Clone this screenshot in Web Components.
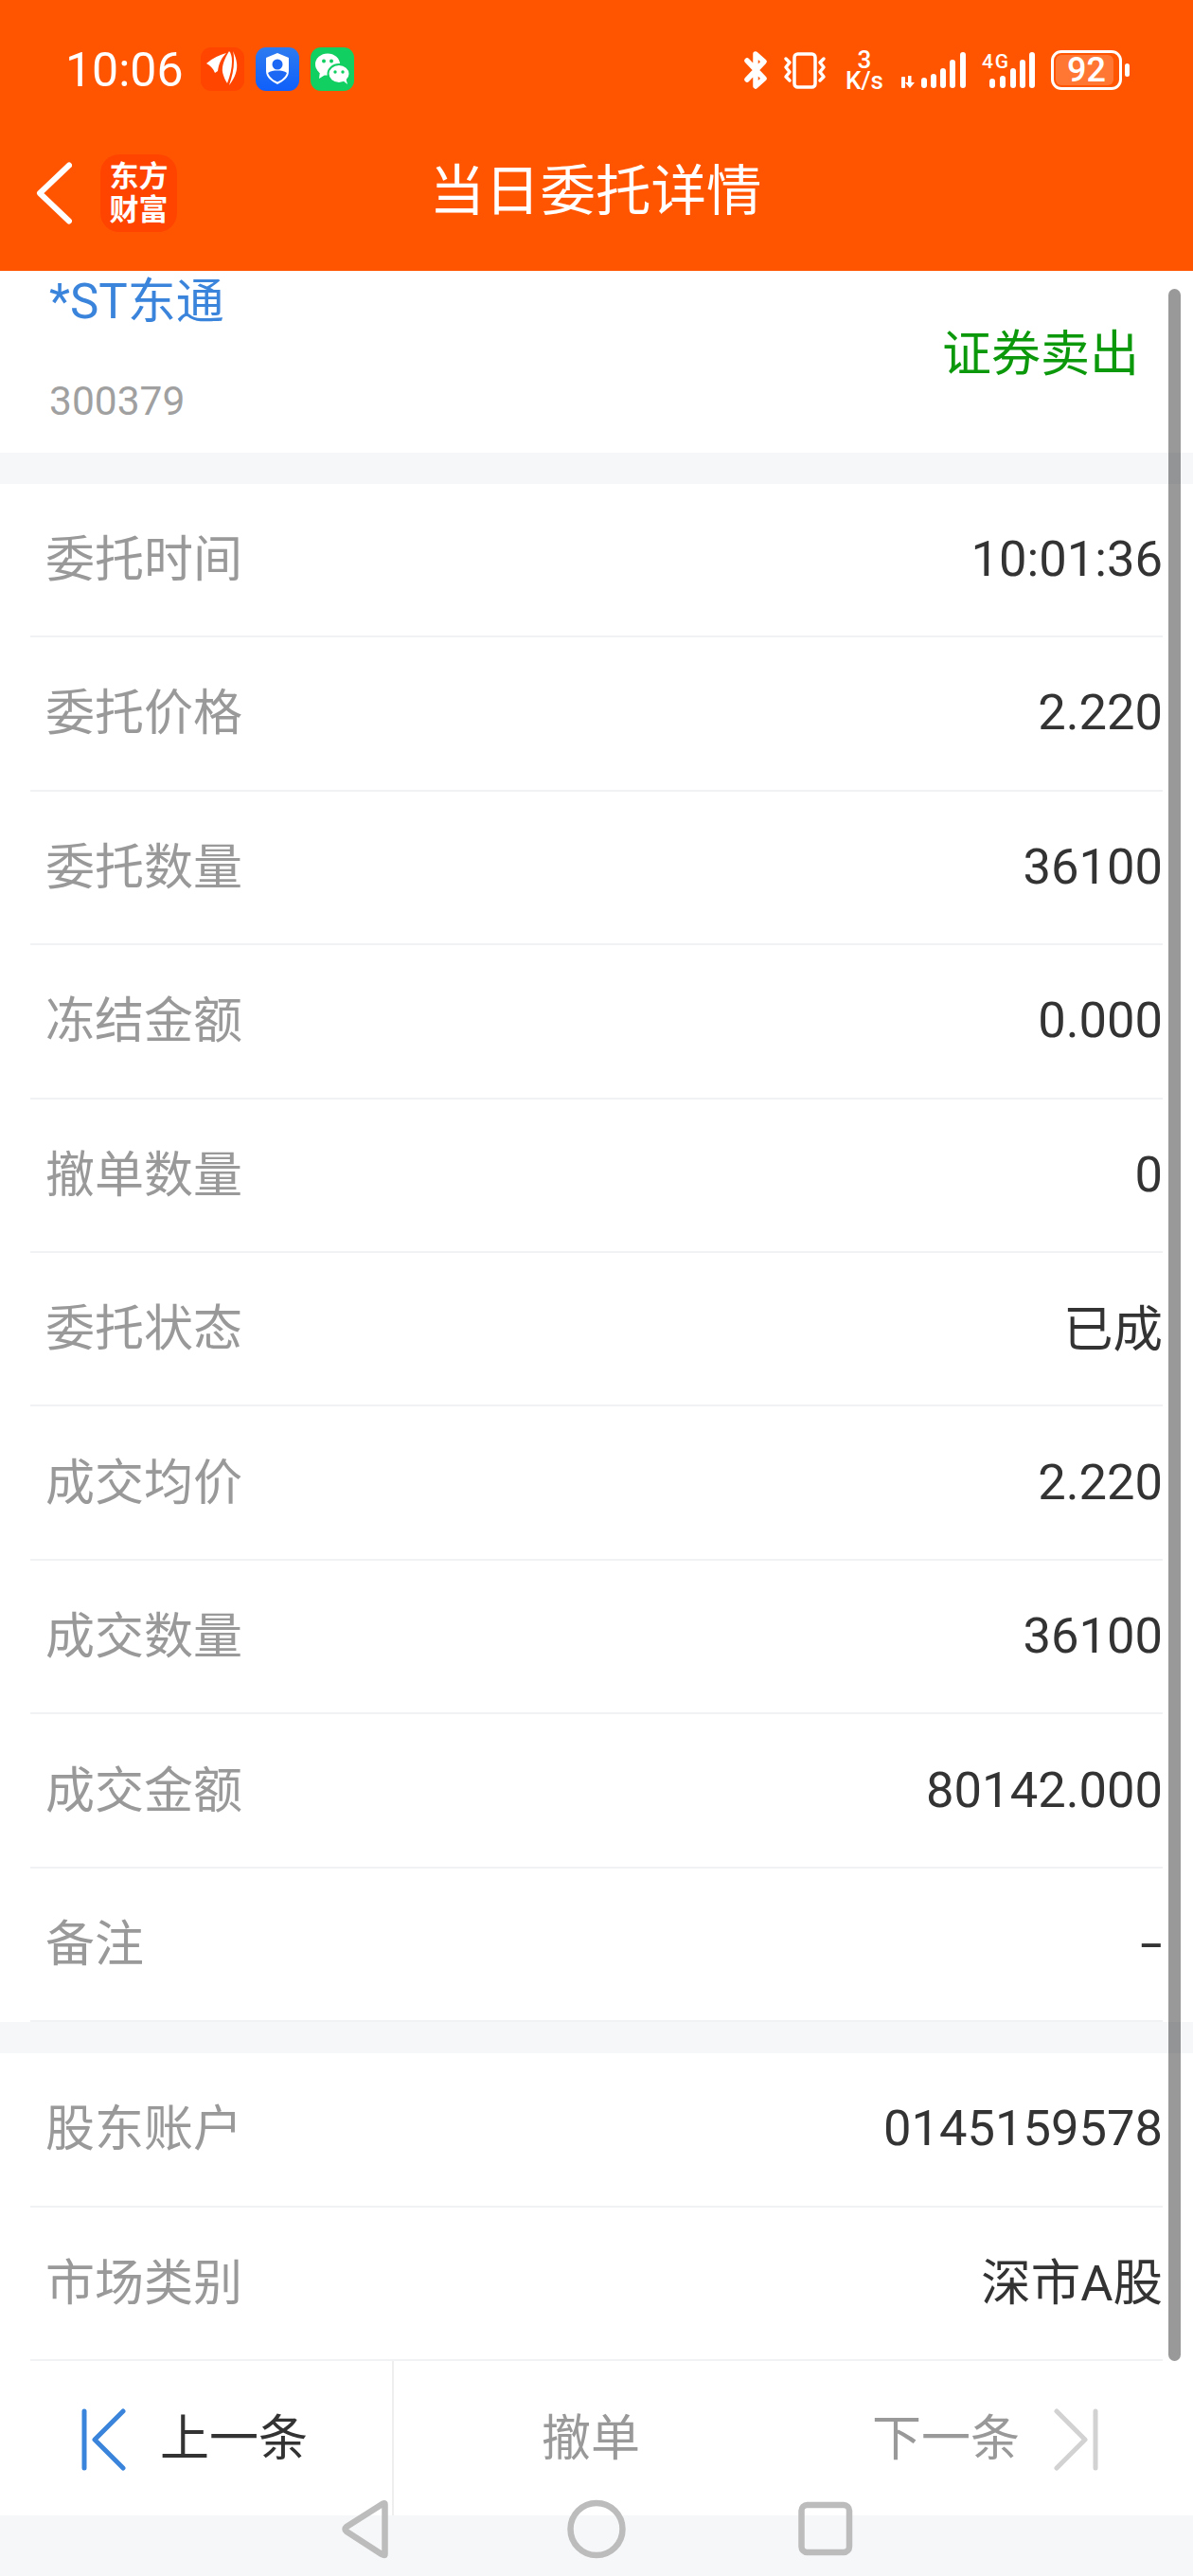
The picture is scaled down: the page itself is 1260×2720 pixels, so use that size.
<!DOCTYPE html>
<html lang="zh-CN">
<head>
<meta charset="utf-8">
<title>当日委托详情</title>
<style>
    html, body {
        margin: 0;
        padding: 0;
        background: #fff;
        font-family: Roboto, "Noto Sans CJK SC", sans-serif;
    }
</style>
</head>
<body>
<app-screen>
    <status-bar></status-bar>
    <title-bar>当日委托详情</title-bar>
    <stock-head name="*ST东通" code="300379">证券卖出</stock-head>
    <gap-band></gap-band>
    <detail-row><span slot="label">委托时间</span>10:01:36</detail-row>
    <detail-row><span slot="label">委托价格</span>2.220</detail-row>
    <detail-row><span slot="label">委托数量</span>36100</detail-row>
    <detail-row><span slot="label">冻结金额</span>0.000</detail-row>
    <detail-row><span slot="label">撤单数量</span>0</detail-row>
    <detail-row cjk><span slot="label">委托状态</span>已成</detail-row>
    <detail-row><span slot="label">成交均价</span>2.220</detail-row>
    <detail-row><span slot="label">成交数量</span>36100</detail-row>
    <detail-row><span slot="label">成交金额</span>80142.000</detail-row>
    <detail-row><span slot="label">备注</span><span style="display:inline-block;transform:scaleX(1.6);transform-origin:right center">-</span></detail-row>
    <gap-band></gap-band>
    <detail-row><span slot="label">股东账户</span>0145159578</detail-row>
    <detail-row cjk><span slot="label">市场类别</span>深市A股</detail-row>
    <action-bar></action-bar>
    <nav-bar></nav-bar>
    <scroll-thumb></scroll-thumb>
</app-screen>

<script>
class AppScreen extends HTMLElement {
    constructor() {
        super();
        this.attachShadow({ mode: 'open' });
    }

    connectedCallback() {
        this.shadowRoot.innerHTML = `
            <style>
                :host {
                    display: flex;
                    flex-direction: column;
                    position: relative;
                    width: 1260px;
                    height: 2720px;
                    overflow: hidden;
                    background: #fff;
                }
            </style>
            <slot></slot>
        `;
    }
}

class StatusBar extends HTMLElement {
    constructor() {
        super();
        this.attachShadow({ mode: 'open' });
    }

    connectedCallback() {
        this.shadowRoot.innerHTML = `
            <style>
                :host {
                    display: flex;
                    align-items: center;
                    box-sizing: border-box;
                    height: 146px;
                    padding: 0 67px 0 69px;
                    background: #ff5500;
                    color: #fff;
                }
                .time {
                    width: 143px;
                    margin-top: 2px;
                    font-size: 50px;
                    line-height: 48px;
                    white-space: nowrap;
                }
                .apps {
                    display: flex;
                    gap: 12px;
                }
                .apps svg {
                    display: block;
                    width: 46px;
                    height: 46px;
                }
                .right {
                    display: flex;
                    align-items: center;
                    margin-left: auto;
                    height: 44px;
                    margin-top: 2px;
                }
                .right svg {
                    display: block;
                    height: 44px;
                    flex: none;
                    overflow: visible;
                }
                .speed {
                    width: 40px;
                    margin: 0 19px 0 20px;
                    font-size: 26px;
                    line-height: 22px;
                    font-weight: 500;
                    text-align: center;
                    white-space: nowrap;
                }
                .battery {
                    position: relative;
                    box-sizing: border-box;
                    width: 75px;
                    height: 42px;
                    margin-left: 17px;
                    border: 3px solid #fff;
                    border-radius: 11px;
                    font-size: 36px;
                    font-weight: 500;
                    line-height: 36px;
                    text-align: center;
                }
                .battery::before {
                    content: "";
                    position: absolute;
                    inset: 2px 6px 2px 2px;
                    border-radius: 6px;
                    background: rgba(255, 255, 255, 0.2);
                }
                .battery span {
                    position: relative;
                }
                .nub {
                    width: 5px;
                    height: 14px;
                    margin-left: 3px;
                    border-radius: 3px;
                    background: #fff;
                }
            </style>
            <div class="time">10:06</div>
            <div class="apps">
                <svg viewBox="0 0 46 46">
                    <rect x="0" y="0" width="46" height="46" rx="11" fill="#ff4500"/>
                    <path fill="#fff" d="M6 17C13 11 20 8 27 6C22 11 19 17 18 25L15 27C13 22 10 19 6 17Z"/>
                    <path fill="#fff" d="M30 4C25 12 22 20 23 26C24 31 26 35 28 38C31 30 33 22 33 15C33 10 32 6 30 4Z"/>
                    <path fill="#fff" d="M34 4C37 10 39 17 38 23C37 30 33 36 30 40C33 31 35 23 35 15C35 11 35 7 34 4Z"/>
                </svg>
                <svg viewBox="0 0 46 46">
                    <defs><linearGradient id="blue" x1="0" y1="0" x2="0" y2="1">
                        <stop offset="0" stop-color="#2d7bf0"/><stop offset="1" stop-color="#0f5ffb"/>
                    </linearGradient></defs>
                    <rect width="46" height="46" rx="11" fill="url(#blue)"/>
                    <path fill="#fff" d="M23 6L35 11V25C35 32 29 36 23 39C17 36 11 32 11 25V11Z"/>
                    <circle cx="23" cy="18" r="5.5" fill="#1c68f5"/>
                    <path fill="#1c68f5" d="M13 27C15.500 25 19 24.500 23 24.500S30.500 25 33 27C31 32 27 35 23 36.500C19 35 15 32 13 27Z"/>
                </svg>
                <svg viewBox="0 0 46 46">
                    <rect width="46" height="46" rx="11" fill="#12cf62"/>
                    <ellipse cx="18" cy="18" rx="13" ry="11.500" fill="#fff"/>
                    <path fill="#fff" d="M10 25L9 33L17 28Z"/>
                    <ellipse cx="30" cy="28" rx="11.500" ry="10" fill="#fff" stroke="#12cf62" stroke-width="2"/>
                    <path fill="#fff" d="M34 35L39 39L37 32Z"/>
                    <circle cx="14" cy="14.500" r="2" fill="#12cf62"/>
                    <circle cx="22" cy="14.500" r="2" fill="#12cf62"/>
                    <circle cx="26" cy="26" r="1.700" fill="#12cf62"/>
                    <circle cx="34" cy="26" r="1.700" fill="#12cf62"/>
                </svg>
            </div>
            <div class="right">
                <svg width="25" viewBox="0 0 25 44" fill="none" stroke="#fff" stroke-width="5.500" stroke-linecap="round" stroke-linejoin="round">
                    <path d="M3 12L21 31L12 39V5L21 13L3 32"/>
                </svg>
                <svg width="46" viewBox="0 0 46 44" fill="none" stroke="#fff" stroke-linecap="round" stroke-linejoin="round" style="margin-left:16px">
                    <rect x="12" y="5" width="22" height="35" rx="3.500" stroke-width="3.500"/>
                    <path stroke-width="3.500" d="M3 10L7 14L3 19L7 24L3 29L7 33"/>
                    <path stroke-width="3.500" d="M43 10L39 14L43 19L39 24L43 29L39 33"/>
                </svg>
                <div class="speed">3<br>K/s</div>
                <svg width="68" viewBox="0 0 68 44" fill="#fff">
                    <rect x="0" y="29" width="4" height="12" rx="1"/>
                    <path d="M7 28h3.500v7h3.500l-5 6l-5 -6h3Z"/>
                    <rect x="21" y="30" width="6" height="11" rx="3"/>
                    <rect x="31" y="26" width="6" height="15" rx="3"/>
                    <rect x="41" y="20" width="6" height="21" rx="3"/>
                    <rect x="51" y="11" width="6" height="30" rx="3"/>
                    <rect x="62" y="3" width="6" height="38" rx="3"/>
                </svg>
                <svg width="56" viewBox="0 0 56 44" fill="#fff" style="margin-left:17px">
                    <text x="0" y="20" font-family="Roboto, sans-serif" font-size="21" font-weight="500" textLength="28">4G</text>
                    <rect x="8" y="31" width="6" height="10" rx="3"/>
                    <rect x="19" y="28" width="6" height="13" rx="3"/>
                    <rect x="30" y="20" width="6" height="21" rx="3"/>
                    <rect x="40" y="11" width="6" height="30" rx="3"/>
                    <rect x="50" y="3" width="6" height="38" rx="3"/>
                </svg>
                <div class="battery"><span>92</span></div>
                <div class="nub"></div>
            </div>
        `;
    }
}

class TitleBar extends HTMLElement {
    constructor() {
        super();
        this.attachShadow({ mode: 'open' });
    }

    connectedCallback() {
        this.shadowRoot.innerHTML = `
            <style>
                :host {
                    display: grid;
                    grid-template-columns: 1fr auto 1fr;
                    align-items: center;
                    box-sizing: border-box;
                    height: 140px;
                    padding: 0 0 24px 38px;
                    background: #ff5500;
                    color: #fff;
                }
                .left {
                    display: flex;
                    align-items: center;
                    gap: 30px;
                }
                svg {
                    display: block;
                }
                .logo {
                    box-sizing: border-box;
                    width: 81px;
                    height: 82px;
                    padding-top: 6px;
                    border-radius: 20px;
                    background: #ff4400;
                    font-size: 31px;
                    font-weight: 700;
                    line-height: 35px;
                    text-align: center;
                }
                .title {
                    margin-left: -40px;
                    margin-top: -3px;
                    font-size: 58.500px;
                    line-height: 70px;
                    white-space: nowrap;
                }
            </style>
            <div class="left">
                <svg width="38" height="66" viewBox="0 0 38 66" fill="none" stroke="#fff" stroke-width="6" stroke-linecap="round" stroke-linejoin="round">
                    <path d="M35 3.500L4 33L35 62.500"/>
                </svg>
                <div class="logo">东方<br>财富</div>
            </div>
            <div class="title"><slot></slot></div>
            <div></div>
        `;
    }
}

class StockHead extends HTMLElement {
    constructor() {
        super();
        this.attachShadow({ mode: 'open' });
    }

    connectedCallback() {
        this.shadowRoot.innerHTML = `
            <style>
                :host {
                    display: flex;
                    justify-content: space-between;
                    box-sizing: border-box;
                    height: 192px;
                    padding: 3px 57px 0 52px;
                }
                .name {
                    font-size: 51px;
                    line-height: 60px;
                    color: #3a84dc;
                }
                .code {
                    margin-top: 50px;
                    font-size: 42.500px;
                    line-height: 50px;
                    color: #a0a0a0;
                }
                .kind {
                    align-self: center;
                    padding-bottom: 28px;
                    font-size: 52px;
                    color: #0b990b;
                }
            </style>
            <div>
                <div class="name">${this.getAttribute('name')}</div>
                <div class="code">${this.getAttribute('code')}</div>
            </div>
            <div class="kind"><slot></slot></div>
        `;
    }
}

class GapBand extends HTMLElement {
    constructor() {
        super();
        this.attachShadow({ mode: 'open' });
    }

    connectedCallback() {
        this.shadowRoot.innerHTML = `
            <style>
                :host {
                    display: block;
                    height: 33px;
                    background: #f6f7f9;
                }
            </style>
        `;
    }
}

class DetailRow extends HTMLElement {
    constructor() {
        super();
        this.attachShadow({ mode: 'open' });
    }

    connectedCallback() {
        this.shadowRoot.innerHTML = `
            <style>
                :host {
                    display: flex;
                    align-items: center;
                    justify-content: space-between;
                    box-sizing: border-box;
                    height: 162.500px;
                    margin: 0 32px;
                    padding: 0 0 2px 16px;
                    border-bottom: 2px solid #f1f2f3;
                    font-size: 52.500px;
                    color: #333;
                }
                .label {
                    margin-top: -7px;
                    font-size: 52px;
                    color: #999;
                }
                :host([cjk]) .value {
                    margin-top: -7px;
                }
            </style>
            <div class="label"><slot name="label"></slot></div>
            <div class="value"><slot></slot></div>
        `;
    }
}

class ActionBar extends HTMLElement {
    constructor() {
        super();
        this.attachShadow({ mode: 'open' });
    }

    connectedCallback() {
        this.shadowRoot.innerHTML = `
            <style>
                :host {
                    display: grid;
                    grid-template-columns: 416px 416px 1fr;
                    box-sizing: border-box;
                    height: 163px;
                    font-size: 52px;
                    color: #999;
                }
                div {
                    display: flex;
                    align-items: center;
                }
                svg {
                    display: block;
                    flex: none;
                    margin-top: 3px;
                }
                .prev {
                    gap: 36px;
                    box-sizing: border-box;
                    padding-left: 86px;
                    border-right: 2px solid #eeeeee;
                    color: #333;
                }
                .cancel {
                    justify-content: center;
                }
                .next {
                    justify-content: flex-end;
                    gap: 36px;
                    padding-right: 100px;
                }
                span {
                    margin-top: -8px;
                }
            </style>
            <div class="prev">
                <svg width="47" height="66" viewBox="0 0 47 66" fill="none" stroke="#3a84dc" stroke-width="5" stroke-linecap="round" stroke-linejoin="round">
                    <path d="M3 3V63"/>
                    <path d="M44 3L14 33L44 63"/>
                </svg>
                <span>上一条</span>
            </div>
            <div class="cancel"><span>撤单</span></div>
            <div class="next">
                <span>下一条</span>
                <svg width="47" height="66" viewBox="0 0 47 66" fill="none" stroke="#d2d2d2" stroke-width="5" stroke-linecap="round" stroke-linejoin="round">
                    <path d="M44 3V63"/>
                    <path d="M3 3L33 33L3 63"/>
                </svg>
            </div>
        `;
    }
}

class NavBar extends HTMLElement {
    constructor() {
        super();
        this.attachShadow({ mode: 'open' });
    }

    connectedCallback() {
        this.shadowRoot.innerHTML = `
            <style>
                :host {
                    display: block;
                    position: relative;
                    height: 64px;
                    background: #f6f7f9;
                }
                /* the keys stick out over the action bar above */
                svg {
                    position: absolute;
                    left: 0;
                    top: -17px;
                }
            </style>
            <svg width="1260" height="81" viewBox="0 0 1260 81" fill="none" stroke="#bcbcbc" stroke-width="6.500" stroke-linejoin="round">
                <path d="M406.500 5.500Q406.500 3 403 5.500L366 29Q363 31.500 366 34L403 58Q406.500 60 406.500 58Z"/>
                <circle cx="630" cy="31.500" r="27.500"/>
                <rect x="846.500" y="6" width="50.500" height="50" rx="6"/>
            </svg>
        `;
    }
}

class ScrollThumb extends HTMLElement {
    constructor() {
        super();
        this.attachShadow({ mode: 'open' });
    }

    connectedCallback() {
        this.shadowRoot.innerHTML = `
            <style>
                :host {
                    display: block;
                    position: absolute;
                    left: 1234px;
                    top: 305px;
                    width: 13px;
                    height: 2188px;
                    border-radius: 7px;
                    background: rgba(0, 0, 0, 0.4);
                }
            </style>
        `;
    }
}

customElements.define('app-screen', AppScreen);
customElements.define('status-bar', StatusBar);
customElements.define('title-bar', TitleBar);
customElements.define('stock-head', StockHead);
customElements.define('gap-band', GapBand);
customElements.define('detail-row', DetailRow);
customElements.define('action-bar', ActionBar);
customElements.define('nav-bar', NavBar);
customElements.define('scroll-thumb', ScrollThumb);
</script>
</body>
</html>
